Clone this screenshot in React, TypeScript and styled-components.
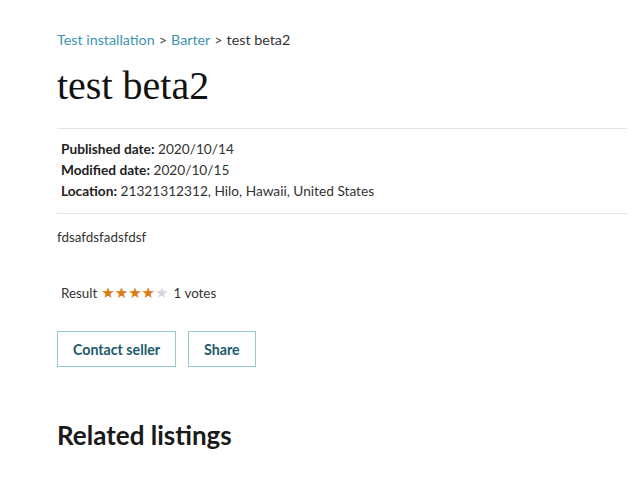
import React from 'react';
import styled, { createGlobalStyle } from 'styled-components';

const GlobalStyle = createGlobalStyle`
  html, body {
    margin: 0;
    padding: 0;
    background: #ffffff;
  }
  body {
    font-family: Lato, "Noto Sans", "Liberation Sans", sans-serif;
    color: #222;
  }
`;

const listing = {
  breadcrumb: [
    { label: 'Test installation', link: true },
    { label: 'Barter', link: true },
    { label: 'test beta2', link: false },
  ],
  title: 'test beta2',
  meta: [
    { label: 'Published date:', value: '2020/10/14' },
    { label: 'Modified date:', value: '2020/10/15' },
    { label: 'Location:', value: '21321312312, Hilo, Hawaii, United States' },
  ],
  description: 'fdsafdsfadsfdsf',
  rating: 4,
  votes: 1,
};

const App: React.FC = () => {
  return (
    <Page>
      <GlobalStyle />
      <Breadcrumb>
        {listing.breadcrumb.map((crumb, i) => (
          <React.Fragment key={crumb.label}>
            {i > 0 && <Sep>&gt;</Sep>}
            {crumb.link ? <CrumbLink href="#">{crumb.label}</CrumbLink> : <span>{crumb.label}</span>}
          </React.Fragment>
        ))}
      </Breadcrumb>
      <Title>{listing.title}</Title>
      <MetaBlock>
        {listing.meta.map((m) => (
          <MetaRow key={m.label}>
            <MetaLabel>{m.label}</MetaLabel> {m.value}
          </MetaRow>
        ))}
      </MetaBlock>
      <Description>{listing.description}</Description>
      <ResultRow>
        <span>Result</span>
        <Stars>
          {[1, 2, 3, 4, 5].map((n) => (
            <Star key={n} $on={n <= listing.rating}>★</Star>
          ))}
        </Stars>
        <span>{listing.votes} votes</span>
      </ResultRow>
      <Actions>
        <OutlineButton>Contact seller</OutlineButton>
        <OutlineButton>Share</OutlineButton>
      </Actions>
      <SectionTitle>Related listings</SectionTitle>
    </Page>
  );
};

const Page = styled.div`
  padding: 31px 13px 0 57px;
  width: 570px;
`;

const Breadcrumb = styled.div`
  font-size: 14.3px;
  line-height: 18px;
  color: #333;
`;

const CrumbLink = styled.a`
  color: #3d94b0;
  text-decoration: none;
`;

const Sep = styled.span`
  margin: 0 4px;
  color: #444;
`;

const Title = styled.h1`
  margin: 12px 0 0 0;
  font-family: "Liberation Serif", "DejaVu Serif", serif;
  font-weight: 400;
  font-size: 40px;
  line-height: 50px;
  color: #111;
  padding-bottom: 17px;
  border-bottom: 1px solid #e3e3e3;
`;

const MetaBlock = styled.div`
  padding: 9px 0 12px 4px;
  border-bottom: 1px solid #e3e3e3;
`;

const MetaRow = styled.div`
  font-size: 13.7px;
  line-height: 21px;
  color: #333;
`;

const MetaLabel = styled.strong`
  font-weight: 700;
  color: #222;
`;

const Description = styled.p`
  margin: 14px 0 0 0;
  font-size: 13.4px;
  line-height: 18px;
  color: #333;
`;

const ResultRow = styled.div`
  margin-top: 37px;
  margin-left: 4px;
  display: flex;
  align-items: center;
  gap: 4px;
  font-size: 13.4px;
  line-height: 20px;
  color: #333;
`;

const Stars = styled.span`
  display: inline-flex;
  margin-right: 1px;
`;

const Star = styled.span<{ $on: boolean }>`
  font-family: "DejaVu Sans", sans-serif;
  font-size: 15px;
  line-height: 20px;
  color: ${(p) => (p.$on ? '#dd7a12' : '#d6d6d6')};
`;

const Actions = styled.div`
  margin-top: 28px;
  display: flex;
  gap: 12px;
`;

const OutlineButton = styled.button`
  font-family: Lato, "Noto Sans", "Liberation Sans", sans-serif;
  font-size: 14.2px;
  font-weight: 700;
  color: #1d5a6c;
  background: #fff;
  border: 1px solid #93c9cf;
  height: 36px;
  padding: 0 15px;
  cursor: pointer;
`;

const SectionTitle = styled.h2`
  margin: 53px 0 0 0;
  font-size: 26px;
  font-weight: 700;
  line-height: 30px;
  color: #1a1a1a;
`;

export default App;
